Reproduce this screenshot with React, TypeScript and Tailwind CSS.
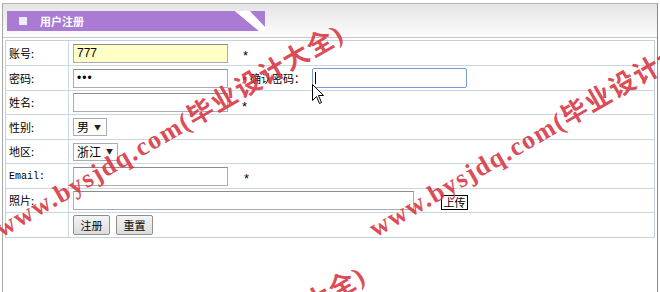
import type { ReactNode } from 'react';

const WM = 'www.bysjdq.com(毕业设计大全)';

function Row({ label, className, children, mono }: { label: string; className: string; children?: ReactNode; mono?: boolean }) {
  return (
    <div className={`flex ${className}`}>
      <div
        className={`flex w-[63px] shrink-0 items-center border-r border-[#c9d6e3] pl-[3px] ${
          mono ? "font-['Liberation_Mono',monospace] text-[10px]" : 'text-[11px]'
        }`}
      >
        {label}
      </div>
      <div className="flex flex-1 items-center pl-[4px] text-[11px]">{children}</div>
    </div>
  );
}

function Field({ children, yellow }: { children?: ReactNode; yellow?: boolean }) {
  return (
    <div
      className={`flex h-[19px] w-[155px] items-center border border-[#a9adb3] border-t-[#8c8c8c] px-[3px] font-['Liberation_Sans',sans-serif] text-[12px] ${
        yellow ? 'bg-[#ffffc6]' : 'bg-white'
      }`}
    >
      {children}
    </div>
  );
}

function Star({ className }: { className: string }) {
  return <span className={`font-['Liberation_Sans',sans-serif] text-[13px] leading-none ${className}`}>*</span>;
}

function Select({ text, width }: { text: string; width: string }) {
  return (
    <div className={`flex h-[18px] items-center gap-[5px] border border-[#a9adb3] bg-white pl-[3px] text-[12px] ${width}`}>
      <span>{text}</span>
      <span className="text-[7px] text-[#222]">▼</span>
    </div>
  );
}

function Btn({ children }: { children: ReactNode }) {
  return (
    <div className="flex h-[20px] w-[37px] items-center justify-center rounded-[2px] border border-[#8f8f8f] bg-gradient-to-b from-[#f4f4f4] to-[#dcdcdc] text-[11px]">
      {children}
    </div>
  );
}

export default function App() {
  return (
    <div className="relative h-[292px] w-[660px] overflow-hidden bg-white pl-[2px] pt-[3px] font-['Noto_Sans_CJK_SC',sans-serif] text-black">
      <div className="h-[289px] w-[656px] border-l border-r border-t border-l-[#a8a8a8] border-r-[#8a8a8a] border-t-[#b4b4b4]">
        {/* header */}
        <div className="h-[34px] border-b border-[#c6c6c6] bg-gradient-to-b from-[#e4e4e4] to-[#fcfcfc] pl-[4px] pt-[7px]">
          <div className="flex h-[20px]">
            <div className="flex w-[228px] items-center bg-[#a97bd3] pl-[12px]">
              <span className="h-[8px] w-[8px] bg-[#f1eaf8]" />
              <span className="ml-[13px] text-[11px] font-bold text-white">用户注册</span>
            </div>
            <svg width="30" height="20" viewBox="0 0 30 20">
              <polygon points="0,0 24,20 0,20" fill="#a97bd3" />
              <polygon points="0,0 15,0 30,16 30,20 24,20" fill="#ffffff" />
              <polygon points="15,0 30,0 30,16" fill="#a97bd3" />
            </svg>
          </div>
        </div>

        {/* form table */}
        <div className="mx-[2px] mt-[2px] border border-[#c3d1df] bg-white">
          <Row label="账号:" className="h-[25px] border-b border-[#c9d6e3]">
            <Field yellow>777</Field>
            <Star className="ml-[15px] pt-[4px]" />
          </Row>
          <Row label="密码:" className="h-[25px] border-b border-[#c9d6e3]">
            <Field>
              <span className="text-[12px] tracking-[1px]">•••</span>
            </Field>
            <Star className="ml-[14px] pt-[4px]" />
            <span className="ml-[3px]">确认密码：</span>
            <div className="ml-[7px] flex h-[20px] w-[155px] items-center rounded-[2px] border border-[#7a9bd0] bg-white pl-[2px]">
              <span className="h-[12px] w-px bg-black" />
            </div>
          </Row>
          <Row label="姓名:" className="h-[24px] border-b border-[#c9d6e3]">
            <Field />
            <Star className="ml-[14px] pt-[8px]" />
          </Row>
          <Row label="性别:" className="h-[25px] border-b border-[#c9d6e3]">
            <Select text="男" width="w-[34px]" />
          </Row>
          <Row label="地区:" className="h-[24px] border-b border-[#c9d6e3]">
            <Select text="浙江" width="w-[45px]" />
          </Row>
          <Row label="Email:" mono className="h-[25px] border-b border-[#c9d6e3]">
            <Field />
            <Star className="ml-[16px] pt-[4px]" />
          </Row>
          <Row label="照片:" className="h-[24px] border-b border-[#c9d6e3]">
            <div className="h-[19px] w-[341px] border border-[#a9adb3] border-t-[#8c8c8c] bg-white" />
            <div className="ml-[27px] mt-[4px] flex h-[15px] w-[27px] items-center justify-center border border-black bg-white text-[11px] leading-none">
              上传
            </div>
          </Row>
          <Row label="" className="h-[24px]">
            <div className="flex gap-[6px]">
              <Btn>注册</Btn>
              <Btn>重置</Btn>
            </div>
          </Row>
        </div>
      </div>

      {/* watermark */}
      <span className="pointer-events-none absolute left-[4px] top-[216px] origin-bottom-left -rotate-[30deg] whitespace-nowrap font-['Liberation_Serif','Noto_Sans_CJK_SC',serif] text-[26px] font-bold leading-[26px] tracking-[1.6px] text-[#d9343f]/90">
        {WM}
      </span>
      <span className="pointer-events-none absolute left-[378px] top-[216px] origin-bottom-left -rotate-[30deg] whitespace-nowrap font-['Liberation_Serif','Noto_Sans_CJK_SC',serif] text-[26px] font-bold leading-[26px] tracking-[1.6px] text-[#d9343f]/90">
        {WM}
      </span>
      <span className="pointer-events-none absolute left-[26px] top-[458px] origin-bottom-left -rotate-[30deg] whitespace-nowrap font-['Liberation_Serif','Noto_Sans_CJK_SC',serif] text-[26px] font-bold leading-[26px] tracking-[1.6px] text-[#d9343f]/90">
        {WM}
      </span>

      {/* mouse pointer */}
      <svg className="absolute left-[312px] top-[84px]" width="13" height="21" viewBox="0 0 13 21">
        <path d="M0.5 0.5 L0.5 16.5 L4.5 12.5 L7.5 19.5 L9.5 18.5 L6.5 11.5 L11.5 11.5 Z" fill="#ffffff" stroke="#000000" strokeWidth="1" />
      </svg>
    </div>
  );
}
